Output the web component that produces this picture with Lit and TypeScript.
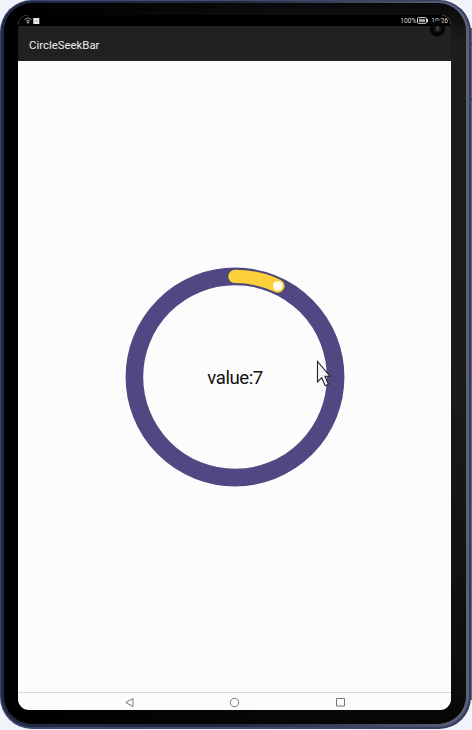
import { LitElement, html, css, svg } from "lit";
import { customElement, property } from "lit/decorators.js";

@customElement("circle-seek-bar")
class CircleSeekBar extends LitElement {
  @property({ type: Number }) value = 7;
  static styles = css`
    :host { display: block; width: 220px; height: 220px; }
    svg { display: block; }
    .ring { fill: none; stroke: #504783; stroke-width: 17.6; }
    .edge { fill: none; stroke: #4b4870; stroke-width: 15.4; stroke-linecap: round; }
    .progress { fill: none; stroke: #fbd03b; stroke-width: 13.4; stroke-linecap: round; }
    .thumb { fill: #fffdf0; }
    text { font: 18.6px Roboto, sans-serif; fill: #111; text-anchor: middle; }
  `;
  render() {
    const r = 100.6;
    const a = (this.value / 100) * Math.PI * 2;
    const x = 110 + r * Math.sin(a);
    const y = 110 - r * Math.cos(a);
    const arc = `M110 ${110 - r} A${r} ${r} 0 ${this.value > 50 ? 1 : 0} 1 ${x} ${y}`;
    return html`<svg width="220" height="220" viewBox="0 0 220 220">
      <circle class="ring" cx="110" cy="110" r=${r}></circle>
      ${svg`<path class="edge" d=${arc}></path><path class="progress" d=${arc}></path>
      <circle class="thumb" cx=${x} cy=${y} r="4.8"></circle>`}
      <text x="110.3" y="117" textLength="56">value:${this.value}</text>
    </svg>`;
  }
}

@customElement("app-root")
class AppRoot extends LitElement {
  static styles = css`
    :host { display: block; position: relative; width: 472px; height: 730px; overflow: hidden; background: #f2f3fa; font-family: Roboto, sans-serif; }
    .side { position: absolute; right: 0; top: 28px; width: 10px; height: 672px; background: linear-gradient(#60636d 15px, #20232b 15px, #20232b 16px, #60636d 16px, #60636d 71px, #20232b 71px, #20232b 72px, #656a76 72px); }
    .tablet { position: relative; box-sizing: border-box; width: 471px; height: 729px; border-radius: 32px; padding: 1px 2px 2px 1px; background: linear-gradient(90deg, #3c4670, #474c6c 50%, #333b5e); }
    .rim { box-sizing: border-box; height: 726px; border-radius: 31px; padding: 2px 3px 3px 3px; background: linear-gradient(90deg, #202944 0 50%, #5c6079 100%); }
    .bezel { box-sizing: border-box; height: 721px; border-radius: 28px; padding: 12px 12px 11px 14px; background: linear-gradient(90deg, #000 0 20px, transparent 60%), linear-gradient(#08090a, #1c1c1c 40px, #1c1b1a 50%, #0b0d0c 95%, #050505); }
    .screen { width: 433px; height: 695px; display: flex; flex-direction: column; border-radius: 10px 10px 11px 11px; overflow: hidden; background: #fcfcfd; }
    .status { height: 11px; flex: none; display: flex; align-items: center; padding: 0 3px 0 6px; background: #000; color: #ddd; font-size: 6.7px; }
    .status svg { flex: none; }
    .spacer { flex: 1; }
    .battery { margin: 0 3px 0 1px; }
    .title { box-sizing: border-box; height: 35px; flex: none; display: flex; align-items: center; padding: 2px 0 0 11px; background: #212121; color: #eee; font-size: 11.4px; }
    .body { flex: 1; display: flex; justify-content: center; align-items: center; padding: 1px 0 0 1px; }
    .nav { height: 16px; flex: none; display: flex; justify-content: center; align-items: center; gap: 94.5px; padding: 1px 0 0; border-top: 1px solid #d8d8d8; }
    .nav svg { fill: none; stroke: #777; stroke-width: 1; }
    .camera { position: absolute; left: 429px; top: 20px; }
    .cursor { position: absolute; left: 316px; top: 360px; }
  `;
  render() {
    return html`
      <div class="side"></div>
      <div class="tablet"><div class="rim"><div class="bezel"><div class="screen">
        <div class="status">
          <svg width="17" height="8" viewBox="0 0 17 8"><path d="M0.5 2.5 Q4 -0.5 7.5 2.5 M2 4.2 Q4 2.6 6 4.2" fill="none" stroke="#999"></path><path d="M2.7 4.8H5.3L4 7z" fill="#ccc"></path><rect x="9.3" y="1" width="6" height="6" fill="#e8e8e8"></rect><path d="M11 4h3" stroke="#aaa"></path></svg>
          <span class="spacer"></span><span>100%</span>
          <svg class="battery" width="11" height="7" viewBox="0 0 11 7"><rect x=".5" y=".7" width="9" height="5.6" rx="1" fill="none" stroke="#ddd"></rect><path d="M2 2.2h6v2.6H2z" fill="#bbb"></path><path d="M10.5 2v3" stroke="#ddd"></path></svg>
          <span>10:26</span>
        </div>
        <div class="title">CircleSeekBar</div>
        <div class="body"><circle-seek-bar .value=${7}></circle-seek-bar></div>
        <div class="nav">
          <svg width="11" height="11" viewBox="0 0 11 11"><path d="M9 1.5v8L1.8 5.5z"></path></svg>
          <svg width="11" height="11" viewBox="0 0 11 11"><circle cx="5.5" cy="5.5" r="4.2"></circle></svg>
          <svg width="11" height="11" viewBox="0 0 11 11"><path d="M1.5 1.5h8v7.5h-8z"></path></svg>
        </div>
      </div></div></div></div>
      <svg class="camera" width="17" height="17" viewBox="0 0 17 17"><circle cx="8.5" cy="8.8" r="7.7" fill="#050505"></circle><circle cx="8.5" cy="9" r="3.5" fill="#17191c"></circle><path d="M7 8q2-2 2.5 0t-2 2" fill="none" stroke="#555b60"></path></svg>
      <svg class="cursor" width="18" height="29" viewBox="0 0 18 29"><path d="M1.5 1.5v20.5l4.3-4.3 3.4 8 3.2-1.5-3.4-8h5z" fill="#f4f4fc" stroke="#222" stroke-width="1.1"></path></svg>
    `;
  }
}
